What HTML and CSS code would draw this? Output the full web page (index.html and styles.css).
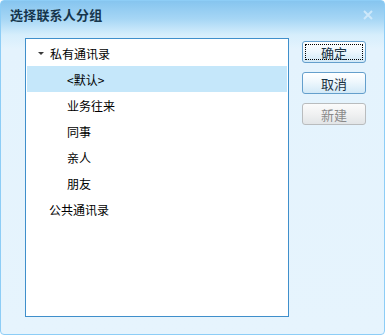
FILE: index.html
```html
<!DOCTYPE html>
<html lang="zh-CN">
<head>
    <meta charset="UTF-8">
    <title>选择联系人分组</title>
    <link rel="stylesheet" href="styles.css">
</head>
<body>
    <div class="dialog">
        <div class="titlebar">
            <span class="title">选择联系人分组</span>
            <svg class="close" viewBox="0 0 10 10">
                <path d="M1 1L9 9M9 1L1 9"/>
            </svg>
        </div>
        <div class="dialog-body">
            <div class="tree">
                <div class="row">
                    <span class="arrow"></span>
                    <span>私有通讯录</span>
                </div>
                <div class="row child selected">&lt;默认&gt;</div>
                <div class="row child">业务往来</div>
                <div class="row child">同事</div>
                <div class="row child">亲人</div>
                <div class="row child">朋友</div>
                <div class="row root">公共通讯录</div>
            </div>
            <div class="buttons">
                <button class="btn default"><span>确定</span></button>
                <button class="btn"><span>取消</span></button>
                <button class="btn" disabled><span>新建</span></button>
            </div>
        </div>
    </div>
</body>
</html>
```

FILE: styles.css
```css
* {
    margin: 0;
    padding: 0;
    box-sizing: border-box;
}

body {
    font-family: "Noto Sans CJK SC", "Liberation Sans", sans-serif;
    font-size: 12px;
    width: 385px;
    height: 335px;
    background: #ffffff;
}

.dialog {
    width: 385px;
    height: 335px;
    border: 1px solid #8dcdf6;
    border-radius: 4px;
    background: linear-gradient(#86c5ef 0, #a6d6f5 18px, #d6eefc 34px, #e4f3fd 48px, #e6f4fd 100%);
    display: flex;
    flex-direction: column;
}

/* Title bar */
.titlebar {
    height: 29px;
    display: flex;
    align-items: center;
    justify-content: space-between;
    padding: 0 11px 2px 9px;
}

.title {
    font-size: 13px;
    font-weight: bold;
    color: #16364c;
    letter-spacing: 0.2px;
}

.close {
    width: 10px;
    height: 10px;
    stroke: #cde8fa;
    stroke-width: 2;
    fill: none;
}

/* Body */
.dialog-body {
    display: flex;
    padding: 8px 0 0 24px;
    gap: 13px;
}

.tree {
    width: 264px;
    height: 279px;
    background: #ffffff;
    border: 1px solid #3f8fcb;
    padding: 1px;
}

.row {
    height: 26px;
    display: flex;
    align-items: center;
    padding-left: 11px;
    color: #000000;
}

.row.child {
    padding-left: 40px;
}

.row.root {
    padding-left: 22px;
}

.row.selected {
    background: #c5e7fa;
}

.arrow {
    width: 0;
    height: 0;
    border-left: 3px solid transparent;
    border-right: 3px solid transparent;
    border-top: 3px solid #3a3a3a;
    margin-right: 6px;
    margin-top: 1px;
}

/* Buttons */
.buttons {
    display: flex;
    flex-direction: column;
    gap: 9px;
    padding-top: 3px;
}

.btn {
    width: 64px;
    height: 22px;
    border: 1px solid #649fcc;
    border-radius: 3px;
    background: linear-gradient(#ffffff 0%, #eef7fd 45%, #d2e9f7 100%);
    font-family: inherit;
    font-size: 13px;
    color: #1a3142;
    padding: 2px;
    display: flex;
}

.btn span {
    flex: 1;
    display: flex;
    align-items: center;
    justify-content: center;
    border: 1px solid transparent;
}

.btn.default span {
    border: 1px dotted #000000;
}

.btn:disabled {
    border-color: #b9bcbe;
    background: linear-gradient(#fbfbfb 0%, #f0f1f2 50%, #e2e5e7 100%);
    color: #8a8a8a;
}
```
